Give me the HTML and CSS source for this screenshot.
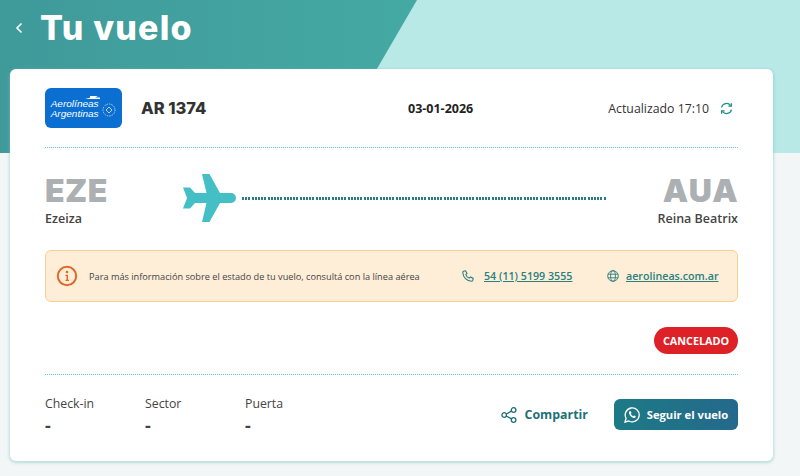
FILE: index.html
```html
<!DOCTYPE html>
<html lang="es">
  <head>
    <meta charset="UTF-8" />
    <meta name="viewport" content="width=device-width, initial-scale=1.0" />
    <title>Tu vuelo</title>
    <link rel="stylesheet" href="styles.css">
  </head>
  <body>
    <div class="hero">
      <div class="hero-title">
        <svg class="back" width="10" height="14" viewBox="0 0 10 14"><path d="M7.5 2.5 3 7l4.5 4.5" fill="none" stroke="#fff" stroke-width="1.6"/></svg>
        <h1>Tu vuelo</h1>
      </div>
    </div>

    <div class="card">
      <div class="flight-row">
        <div class="flight-left">
          <div class="logo">
            <svg class="logo-bird" width="15" height="5" viewBox="0 0 15 5"><path d="M5 0h8L10 1.500h5V3H0l5-1.300z" fill="#fff"/></svg>
            <div class="logo-body">
              <div class="logo-text">Aerolíneas<br>Argentinas</div>
              <svg width="14" height="14" viewBox="0 0 14 14"><circle cx="7" cy="7" r="6" fill="none" stroke="#cfe3f7" stroke-width=".8" stroke-dasharray="1.5 1"/><path d="M7 4 10 7 7 10 4 7z" fill="none" stroke="#fff" stroke-width=".7"/></svg>
            </div>
          </div>
          <span class="flight-code">AR 1374</span>
        </div>
        <span class="flight-date">03-01-2026</span>
        <div class="updated">
          <span>Actualizado 17:10</span>
          <svg width="13" height="13" viewBox="0 0 13 13" fill="none" stroke="#1f8f8c" stroke-width="1.3"><path d="M1.6 5.4A5 5 0 0 1 10.6 3.6"/><path d="M11.4 1.2v3h-3"/><path d="M11.4 7.6A5 5 0 0 1 2.4 9.4"/><path d="M1.6 11.8v-3h3"/></svg>
        </div>
      </div>

      <div class="route">
        <div class="airport">
          <div class="iata">EZE</div>
          <div class="airport-name">Ezeiza</div>
        </div>
        <svg class="plane" width="54" height="48" viewBox="0 0 54 48"><path d="M20 0h7.500L38 19h11a5 5 0 0 1 0 10H38L27.500 48H20l4.500-19H13l-5 5.500H1L5 24 1 13.500h7L13 19h11.500z" fill="#45bfc6"/></svg>
        <div class="route-line"></div>
        <div class="airport airport-end">
          <div class="iata">AUA</div>
          <div class="airport-name">Reina Beatrix</div>
        </div>
      </div>

      <div class="alert">
        <svg class="alert-icon" width="22" height="22" viewBox="0 0 22 22"><circle cx="11" cy="11" r="9.200" fill="none" stroke="#e0672a" stroke-width="2"/><circle cx="11" cy="7" r="1.300" fill="#e0672a"/><path d="M9.500 9.800H12v5h1v1.200H9.500v-1.200h1v-3.800h-1z" fill="#e0672a"/></svg>
        <span class="alert-text">Para más información sobre el estado de tu vuelo, consultá con la línea aérea</span>
        <svg class="phone-icon" width="12" height="12" viewBox="0 0 12 12"><path d="M1.500 1.300 3.600.8 5 3.400 3.800 4.600c.5 1.500 1.800 2.900 3.400 3.500L8.500 7l2.700 1.400-.5 2.100c-.2.500-.6.700-1.100.7C4.800 11 1 7.200.8 2.400c0-.5.200-.9.700-1.100z" fill="none" stroke="#2b7f7d" stroke-width="1.100"/></svg>
        <a class="alert-link link-phone" href="#">54 (11) 5199 3555</a>
        <svg class="globe-icon" width="12" height="12" viewBox="0 0 12 12" fill="none" stroke="#2b7f7d" stroke-width=".9"><circle cx="6" cy="6" r="5.300"/><ellipse cx="6" cy="6" rx="2.400" ry="5.300"/><path d="M.9 4.200h10.200M.9 7.800h10.200"/></svg>
        <a class="alert-link" href="#">aerolineas.com.ar</a>
      </div>

      <div class="status-row">
        <span class="status">CANCELADO</span>
      </div>

      <div class="footer-row">
        <div class="info-list">
          <div class="info">
            <div class="info-label">Check-in</div>
            <div class="info-value">-</div>
          </div>
          <div class="info">
            <div class="info-label">Sector</div>
            <div class="info-value">-</div>
          </div>
          <div class="info">
            <div class="info-label">Puerta</div>
            <div class="info-value">-</div>
          </div>
        </div>
        <div class="actions">
          <a class="share" href="#">
            <svg width="16" height="16" viewBox="0 0 16 16" fill="none" stroke="#1f7078" stroke-width="1.300"><circle cx="3.200" cy="8" r="2.300"/><circle cx="12.600" cy="3" r="2.300"/><circle cx="12.600" cy="13" r="2.300"/><path d="M5.300 7 10.500 4.100M5.300 9l5.200 2.900"/></svg>
            Compartir
          </a>
          <button class="follow" type="button">
            <svg width="16" height="16" viewBox="0 0 16 16"><path d="M1 15l1.100-3.700A7 7 0 1 1 4.800 14z" fill="none" stroke="#fff" stroke-width="1.300"/><path d="M5.700 4.300c-.9.600-1 1.700-.4 2.900.7 1.500 2 2.800 3.600 3.500 1.200.5 2.300.3 2.800-.6l-.2-1-1.500-.7-.8.800c-1-.4-1.900-1.300-2.400-2.400l.7-.8-.7-1.700z" fill="#fff"/></svg>
            Seguir el vuelo
          </button>
        </div>
      </div>
    </div>
  </body>
</html>
```

FILE: styles.css
```css
* {
  box-sizing: border-box;
}
html {
  overflow: hidden;
}
body {
  margin: 0;
  height: 476px;
  overflow: hidden;
  font-family: "Open Sans", Arial, sans-serif;
  background-color: #f3f6f6;
  color: #333;
}
a {
  color: inherit;
}

/* header */
.hero {
  position: relative;
  height: 153px;
  background-color: #b8e9e6;
}
.hero::before {
  content: "";
  position: absolute;
  inset: 0;
  background: linear-gradient(90deg, #3f9a9a, #4ab7ac);
  clip-path: polygon(0 0, 417px 0, 328px 153px, 0 153px);
}
.hero-title {
  position: relative;
  display: flex;
  align-items: center;
  height: 56px;
  padding-left: 14px;
  color: #fff;
}
.back {
  margin-right: 16px;
}
h1 {
  margin: 0;
  font-family: Inter, "Open Sans", sans-serif;
  font-size: 34px;
  font-weight: 800;
  letter-spacing: 1.2px;
  line-height: 1;
}

/* card */
.card {
  position: relative;
  width: 763px;
  height: 392px;
  margin: -84px 0 0 10px;
  padding: 0 35px;
  background-color: #fff;
  border-radius: 6px;
  box-shadow: 0 1px 3px 1px rgba(120, 190, 190, 0.45);
}
.flight-row {
  display: flex;
  align-items: center;
  height: 79px;
  border-bottom: 1px dotted #5fd0d0;
}
.flight-left {
  display: flex;
  align-items: center;
  gap: 19px;
  width: 363px;
}
.logo {
  display: flex;
  flex-direction: column;
  align-items: center;
  justify-content: center;
  width: 77px;
  height: 40px;
  border-radius: 6px;
  background-color: #0a6fd0;
  color: #fff;
}
.logo-bird {
  margin: 0 0 -1px 18px;
}
.logo-body {
  display: flex;
  align-items: center;
  gap: 3px;
}
.logo-text {
  margin-left: 7px;
  font-family: "Liberation Sans", Arial, sans-serif;
  font-size: 8.5px;
  font-style: italic;
  line-height: 9.8px;
  text-align: right;
  transform: scaleX(1.18);
  transform-origin: right center;
}
.flight-code {
  font-family: Inter, sans-serif;
  font-size: 16.5px;
  font-weight: 800;
  color: #333;
}
.flight-date {
  margin-right: auto;
  font-size: 12.5px;
  font-weight: 700;
  color: #222;
}
.updated {
  display: flex;
  align-items: center;
  gap: 11px;
  padding-right: 5px;
  font-size: 12.3px;
  color: #333;
}

/* route */
.route {
  display: flex;
  align-items: center;
  height: 102px;
  padding-bottom: 2px;
}
.airport {
  width: 137px;
  margin-top: 6px;
}
.airport-end {
  width: 131px;
  text-align: right;
}
.iata {
  font-family: Inter, sans-serif;
  font-size: 32px;
  font-weight: 900;
  letter-spacing: 0.5px;
  line-height: 34px;
  color: #acb0b3;
}
.airport-end .iata {
  margin-right: -1px;
  letter-spacing: 1.2px;
}
.airport-name {
  margin-top: 2px;
  font-size: 12.5px;
  font-weight: 600;
  line-height: 18px;
  color: #444;
}
.plane {
  flex: none;
}
.route-line {
  width: 365px;
  height: 3px;
  margin-left: 6px;
  background: repeating-linear-gradient(90deg, #2a7d86 0 2px, transparent 2px 3.2px);
}

/* alert */
.alert {
  display: flex;
  align-items: center;
  height: 52px;
  padding-left: 10px;
  background-color: #feeed8;
  border: 1px solid #f6cf94;
  border-radius: 6px;
}
.alert-icon {
  flex: none;
  margin-right: 11px;
}
.alert-text {
  width: 373px;
  font-size: 9.2px;
  color: #444;
}
.phone-icon {
  margin-right: 10px;
}
.globe-icon {
  margin-right: 7px;
}
.alert-link {
  font-size: 10.7px;
  font-weight: 600;
  color: #2b7f7d;
}
.link-phone {
  width: 123px;
}

/* status */
.status-row {
  display: flex;
  justify-content: flex-end;
  align-items: flex-start;
  height: 73px;
  padding-top: 25px;
  border-bottom: 1px dotted #5fd0d0;
}
.status {
  display: flex;
  align-items: center;
  justify-content: center;
  width: 84px;
  height: 27px;
  border-radius: 14px;
  background-color: #de2027;
  color: #fff;
  font-size: 10.8px;
  font-weight: 700;
}

/* footer */
.footer-row {
  display: flex;
  justify-content: space-between;
  align-items: flex-start;
  padding-top: 20px;
}
.info-list {
  display: flex;
}
.info {
  width: 100px;
}
.info-label {
  font-size: 12.3px;
  line-height: 18px;
  color: #444;
}
.info-value {
  font-size: 18px;
  font-weight: 700;
  line-height: 24px;
  color: #444;
}
.actions {
  display: flex;
  align-items: center;
  gap: 26px;
  margin-top: 4px;
}
.share {
  display: flex;
  align-items: center;
  gap: 8px;
  font-size: 12.4px;
  font-weight: 700;
  color: #1f7078;
  text-decoration: none;
}
.follow {
  display: flex;
  align-items: center;
  justify-content: center;
  gap: 7px;
  width: 124px;
  height: 31px;
  padding: 0;
  border: 0;
  border-radius: 6px;
  background: linear-gradient(90deg, #1d7a85, #24698c);
  color: #fff;
  font-family: inherit;
  font-size: 11.2px;
  font-weight: 700;
}
```
